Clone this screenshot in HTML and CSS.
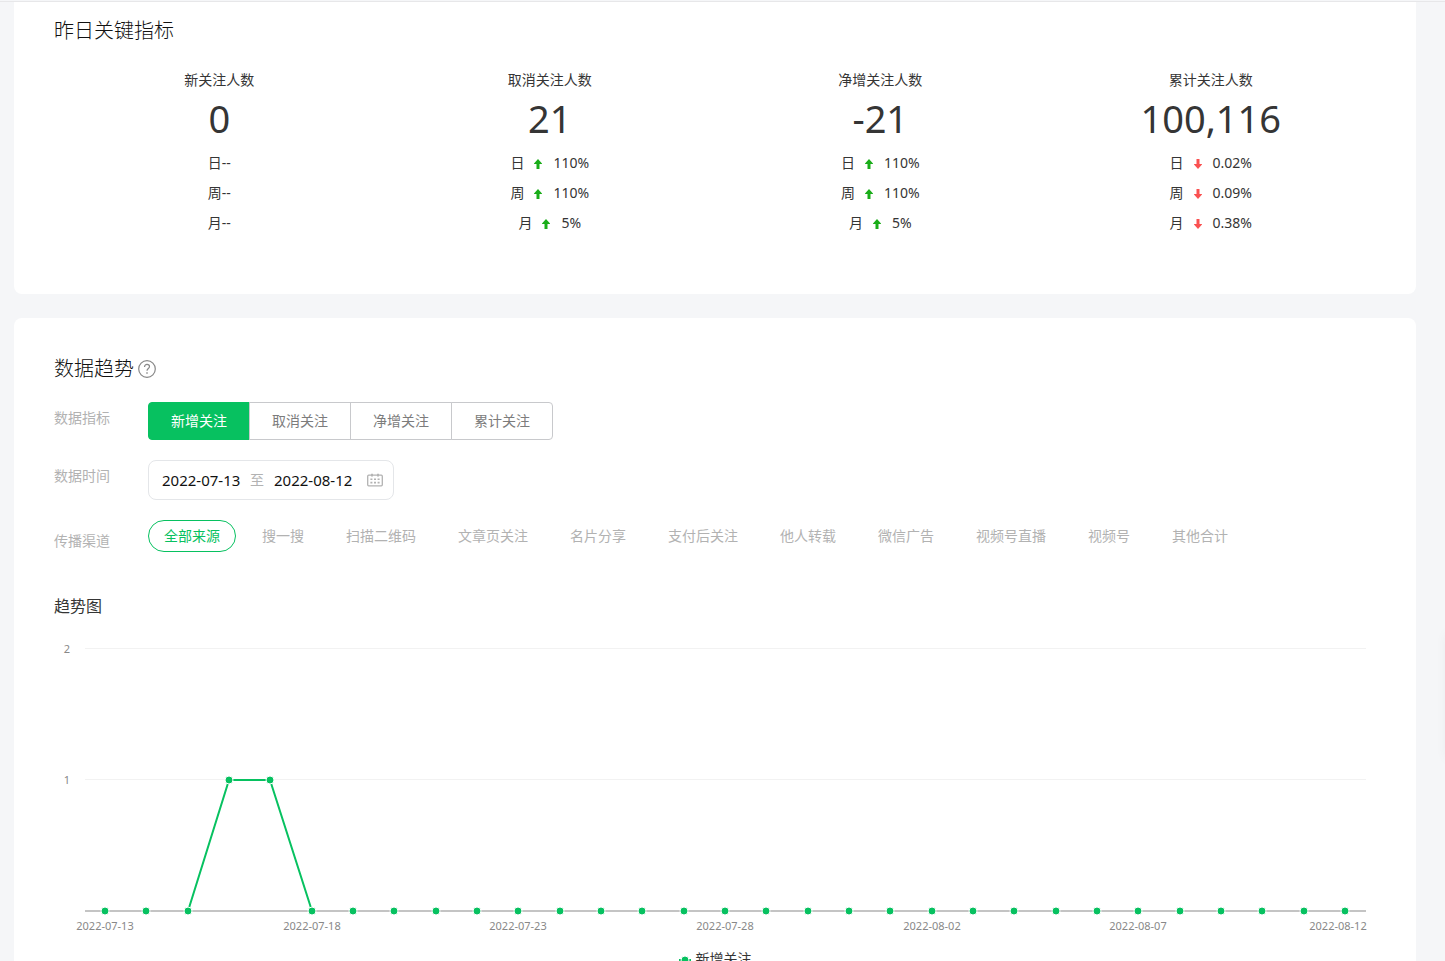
FILE: index.html
```html
<!DOCTYPE html>
<html lang="zh-CN">

<head>
    <meta charset="UTF-8">
    <meta name="viewport" content="width=device-width, initial-scale=1.0">
    <title>用户分析</title>
    <link rel="stylesheet" href="styles.css">
</head>

<body>
    <!-- arrow icons used in the key figures -->
    <svg class="sprite" width="0" height="0" aria-hidden="true">
        <symbol id="up" viewBox="0 0 8 10"><path d="M4 0L8 4.5V5H5.5V10H2.5V5H0V4.5Z" /></symbol>
        <symbol id="down" viewBox="0 0 8 10"><path d="M4 10L8 5.5V5H5.5V0H2.5V5H0V5.5Z" /></symbol>
    </svg>

    <div class="topLine"></div>
    <main class="page">
        <section class="card keyCard">
            <h2 class="title">昨日关键指标</h2>
            <div class="keyList">
                <div class="keyItem">
                    <div class="keyName">新关注人数</div>
                    <div class="keyNum">0</div>
                    <div class="keyRate">日--</div>
                    <div class="keyRate">周--</div>
                    <div class="keyRate">月--</div>
                </div>
                <div class="keyItem">
                    <div class="keyName">取消关注人数</div>
                    <div class="keyNum">21</div>
                    <div class="keyRate">日<svg class="arrow up"><use href="#up" /></svg>110%</div>
                    <div class="keyRate">周<svg class="arrow up"><use href="#up" /></svg>110%</div>
                    <div class="keyRate">月<svg class="arrow up"><use href="#up" /></svg>5%</div>
                </div>
                <div class="keyItem">
                    <div class="keyName">净增关注人数</div>
                    <div class="keyNum">-21</div>
                    <div class="keyRate">日<svg class="arrow up"><use href="#up" /></svg>110%</div>
                    <div class="keyRate">周<svg class="arrow up"><use href="#up" /></svg>110%</div>
                    <div class="keyRate">月<svg class="arrow up"><use href="#up" /></svg>5%</div>
                </div>
                <div class="keyItem">
                    <div class="keyName">累计关注人数</div>
                    <div class="keyNum">100,116</div>
                    <div class="keyRate">日<svg class="arrow down"><use href="#down" /></svg>0.02%</div>
                    <div class="keyRate">周<svg class="arrow down"><use href="#down" /></svg>0.09%</div>
                    <div class="keyRate">月<svg class="arrow down"><use href="#down" /></svg>0.38%</div>
                </div>
            </div>
        </section>

        <section class="card trendCard">
            <div class="titleRow">
                <h2 class="title">数据趋势</h2>
                <button class="helpBtn" type="button" aria-label="帮助">
                    <svg width="18" height="18" viewBox="0 0 18 18" fill="none" stroke="#888">
                        <circle cx="9" cy="9" r="8.3" stroke-width="1.2" />
                        <path d="M6.5 7C6.5 5.4 7.6 4.4 9 4.4C10.4 4.4 11.5 5.3 11.5 6.6C11.5 8.4 9 8.6 9 10.8" stroke-width="1.2" />
                        <path d="M9 12.2V13.7" stroke-width="1.4" />
                    </svg>
                </button>
            </div>

            <div class="filter">
                <div class="filterRow">
                    <div class="filterLabel" id="metricLabel">数据指标</div>
                    <div class="segment" role="group" aria-labelledby="metricLabel">
                        <button class="segBtn active" type="button">新增关注</button>
                        <button class="segBtn" type="button">取消关注</button>
                        <button class="segBtn" type="button">净增关注</button>
                        <button class="segBtn" type="button">累计关注</button>
                    </div>
                </div>
                <div class="filterRow">
                    <label class="filterLabel" for="startDate">数据时间</label>
                    <div class="dateBox">
                        <input class="dateInput" id="startDate" type="text" value="2022-07-13">
                        <label class="dateTo" for="endDate">至</label>
                        <input class="dateInput" id="endDate" type="text" value="2022-08-12">
                        <svg class="calendar" width="16" height="14" viewBox="0 0 16 14" fill="none" stroke="#b2b2b2">
                            <rect x="0.7" y="2.2" width="14.6" height="10.6" rx="1" stroke-width="1.3" />
                            <path d="M5 0.8V3.5M11 0.8V3.5" stroke-width="1.8" />
                            <path d="M3.4 6.2H12.6M3.4 9.6H12.6" stroke-width="1.6" stroke-dasharray="2 1.6" />
                        </svg>
                    </div>
                </div>
                <div class="filterRow">
                    <div class="filterLabel labelLow" id="sourceLabel">传播渠道</div>
                    <div class="sources" role="group" aria-labelledby="sourceLabel">
                        <button class="source active" type="button">全部来源</button>
                        <button class="source" type="button">搜一搜</button>
                        <button class="source" type="button">扫描二维码</button>
                        <button class="source" type="button">文章页关注</button>
                        <button class="source" type="button">名片分享</button>
                        <button class="source" type="button">支付后关注</button>
                        <button class="source" type="button">他人转载</button>
                        <button class="source" type="button">微信广告</button>
                        <button class="source" type="button">视频号直播</button>
                        <button class="source" type="button">视频号</button>
                        <button class="source" type="button">其他合计</button>
                    </div>
                </div>
            </div>

            <h3 class="chartTitle">趋势图</h3>
            <svg class="chart" id="chart" viewBox="0 0 1322 310" role="img" aria-label="趋势图"></svg>
            <div class="legend">
                <svg width="12" height="10" viewBox="0 0 12 10">
                    <path d="M0 6H12" stroke="#07c160" stroke-width="2" />
                    <circle cx="6" cy="6" r="4" fill="#07c160" stroke="#fff" />
                </svg>
                <span>新增关注</span>
            </div>
        </section>
    </main>
    <aside class="sideTool"></aside>

    <script src="chart.js"></script>
</body>

</html>
```

FILE: styles.css
```css
body {
    margin: 0;
    height: 100vh;
    overflow: hidden;
    background-color: #f5f6f8;
    color: #353535;
    font-family: "Noto Sans", "Noto Sans CJK SC", sans-serif;
    font-size: 14px;
    line-height: 20px;
}

button,
input {
    font: inherit;
}

button {
    cursor: pointer;
}

.sprite {
    position: absolute;
}

.topLine {
    height: 1px;
    border-bottom: 1px solid #e7e7e9;
}

.page {
    padding: 0 29px 0 14px;
}

.card {
    background-color: #fff;
    border-radius: 8px;
    padding: 36px 40px;
}

.keyCard {
    border-radius: 0 0 8px 8px;
    padding: 14px 40px 56px;
    margin-bottom: 24px;
}

.title {
    margin: 0;
    font-size: 20px;
    line-height: 30px;
    font-weight: 300;
    color: #111;
}

/* key figures */
.keyList {
    display: grid;
    grid-template-columns: repeat(4, 1fr);
    margin-top: 24px;
    text-align: center;
}

.keyNum {
    margin: 3px 0 5px;
    font-size: 38px;
    line-height: 50px;
}

.keyRate {
    line-height: 30px;
}

.arrow {
    width: 8px;
    height: 10px;
    margin: 0 11px 0 10px;
    vertical-align: -1px;
}

.up {
    fill: #1aad19;
}

.down {
    fill: #fa5151;
}

/* filters */
.titleRow {
    display: flex;
    align-items: center;
    gap: 4px;
}

.helpBtn {
    display: flex;
    padding: 0;
    border: none;
    background: none;
}

.filter {
    display: flex;
    flex-direction: column;
    gap: 20px;
    margin-top: 18px;
}

.filterRow {
    display: flex;
    align-items: flex-start;
}

.filterLabel {
    flex: none;
    width: 94px;
    line-height: 32px;
    color: #b2b2b2;
}

.labelLow {
    padding-top: 5px;
}

.segment {
    display: flex;
}

.segBtn {
    height: 38px;
    padding: 0 22px;
    border: 1px solid #c8c9cc;
    background-color: #fff;
    color: #7c7c7c;
}

.segBtn + .segBtn {
    margin-left: -1px;
}

.segBtn:first-child {
    border-radius: 4px 0 0 4px;
}

.segBtn:last-child {
    border-radius: 0 4px 4px 0;
}

.segBtn.active {
    background-color: #07c160;
    border-color: #07c160;
    color: #fff;
}

.dateBox {
    display: flex;
    align-items: center;
    height: 38px;
    padding: 0 10px 0 13px;
    border: 1px solid #e4e6e9;
    border-radius: 8px;
}

.dateInput {
    width: 80px;
    padding: 0;
    border: none;
    outline: none;
    background: none;
    font-size: 15px;
    color: #111;
}

.dateTo {
    margin: 0 10px 0 8px;
    color: #b2b2b2;
}

.calendar {
    margin-left: 13px;
}

.sources {
    display: flex;
    flex-wrap: wrap;
    gap: 10px;
}

.source {
    height: 32px;
    padding: 0 15px;
    border: 1px solid transparent;
    border-radius: 16px;
    background: none;
    color: #b2b2b2;
}

.source.active {
    border-color: #07c160;
    color: #07c160;
}

/* chart */
.chartTitle {
    margin: 37px 0 12px;
    font-size: 16px;
    line-height: 24px;
    font-weight: 400;
}

.chart {
    display: block;
    width: 100%;
}

.grid {
    stroke: #f2f2f2;
}

.axis {
    stroke: #c4c4c4;
    stroke-width: 2;
}

.line {
    fill: none;
    stroke: #07c160;
    stroke-width: 2;
}

.point {
    fill: #07c160;
    stroke: #fff;
    stroke-width: 1;
}

.tick {
    font-size: 11px;
    fill: #888;
    text-anchor: middle;
}

.legend {
    display: flex;
    justify-content: center;
    align-items: center;
    gap: 5px;
    margin-top: 9px;
}

/* floating tool that waits beyond the right edge */
.sideTool {
    position: fixed;
    right: -50px;
    top: 634px;
    width: 48px;
    height: 124px;
    box-shadow: 0 0 12px rgba(0, 0, 0, 0.06);
}
```

FILE: chart.js
```js
var values = [0, 0, 0, 1, 1, 0];
while (values.length < 31) {
    values.push(0);
}

var left = 51;
var step = 1240 / 30;
var zeroY = 281;
var unit = 131;
var first = Date.UTC(2022, 6, 13);
var html = '';

// grid lines with their values
[1, 2].forEach(function (n) {
    var y = zeroY - n * unit - 0.5;
    html += '<path class="grid" d="M31 ' + y + 'H1312" />';
    html += '<text class="tick" x="13" y="' + (y + 4.5) + '">' + n + '</text>';
});

var points = values.map(function (v, i) {
    return [Math.round(left + i * step), zeroY - v * unit];
});

html += '<polyline class="line" points="' + points.join(' ') + '" />';
html += '<path class="axis" d="M31 ' + zeroY + 'H1312" />';

points.forEach(function (p, i) {
    html += '<circle class="point" cx="' + p[0] + '" cy="' + p[1] + '" r="4" />';
    // one date for every five days, the last one kept inside the axis
    if (i % 5 === 0) {
        var day = new Date(first + i * 86400000).toISOString().slice(0, 10);
        var x = i === 30 ? 1284 : p[0];
        html += '<text class="tick" x="' + x + '" y="300">' + day + '</text>';
    }
});

document.getElementById('chart').innerHTML = html;
```
